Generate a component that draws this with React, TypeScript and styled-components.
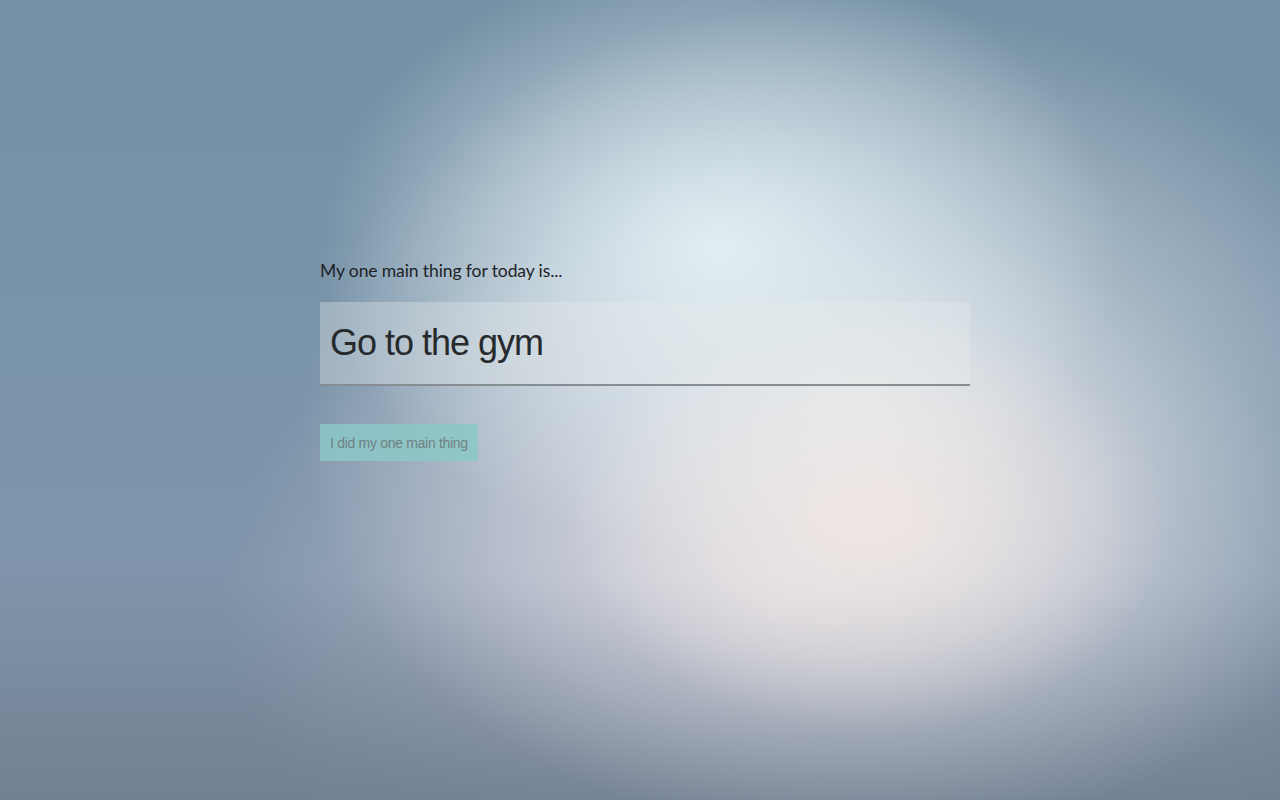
import * as React from 'react';
import styled, { createGlobalStyle } from 'styled-components';

const GlobalStyle = createGlobalStyle`
  html, body, #root {
    margin: 0;
    padding: 0;
    height: 100%;
  }
  body {
    font-family: "Liberation Sans", Arial, sans-serif;
  }
`;

// blurred photo-like backdrop built from stacked radial gradients
const Backdrop = styled.div`
  width: 1280px;
  height: 800px;
  box-sizing: border-box;
  padding: 258px 0 0 320px;
  background:
    radial-gradient(ellipse 300px 210px at 870px 520px, rgba(242, 232, 228, 0.9), rgba(242, 232, 228, 0) 100%),
    radial-gradient(ellipse 400px 300px at 720px 250px, rgba(226, 238, 243, 1), rgba(226, 238, 243, 0) 100%),
    radial-gradient(ellipse 560px 420px at 860px 420px, rgba(230, 233, 236, 0.95), rgba(230, 233, 236, 0) 100%),
    linear-gradient(to bottom, rgba(110, 125, 142, 0) 72%, rgba(110, 125, 142, 0.85) 100%),
    radial-gradient(ellipse 560px 400px at 780px 610px, #cdc8d6, rgba(205, 200, 214, 0) 100%),
    linear-gradient(to bottom, #7390a4 0%, #7a94aa 45%, #8494aa 100%);
`;

const Panel = styled.div`
  width: 650px;
  display: flex;
  flex-direction: column;
  align-items: flex-start;
`;

const Label = styled.label`
  font-family: Lato, "Open Sans", sans-serif;
  font-size: 17.5px;
  color: #1d2226;
  letter-spacing: -0.1px;
  line-height: 26px;
`;

const FocusInput = styled.input`
  margin-top: 18px;
  width: 100%;
  height: 84px;
  box-sizing: border-box;
  padding: 0 10px;
  border: none;
  border-bottom: 2px solid #878e93;
  background: rgba(232, 236, 236, 0.35);
  font-family: "Liberation Sans", Arial, sans-serif;
  font-size: 36px;
  letter-spacing: -1px;
  color: #262a2d;
  outline: none;
`;

const DoneButton = styled.button`
  margin-top: 38px;
  height: 37px;
  padding: 0 10px;
  border: none;
  background: rgba(140, 200, 200, 0.85);
  font-family: "Liberation Sans", Arial, sans-serif;
  font-size: 14px;
  letter-spacing: -0.3px;
  color: #6e8182;
  cursor: pointer;
`;

export default function App() {
  return (
    <>
      <GlobalStyle />
      <Backdrop>
        <Panel>
          <Label htmlFor="focus">My one main thing for today is...</Label>
          <FocusInput id="focus" defaultValue="Go to the gym" />
          <DoneButton>I did my one main thing</DoneButton>
        </Panel>
      </Backdrop>
    </>
  );
}
